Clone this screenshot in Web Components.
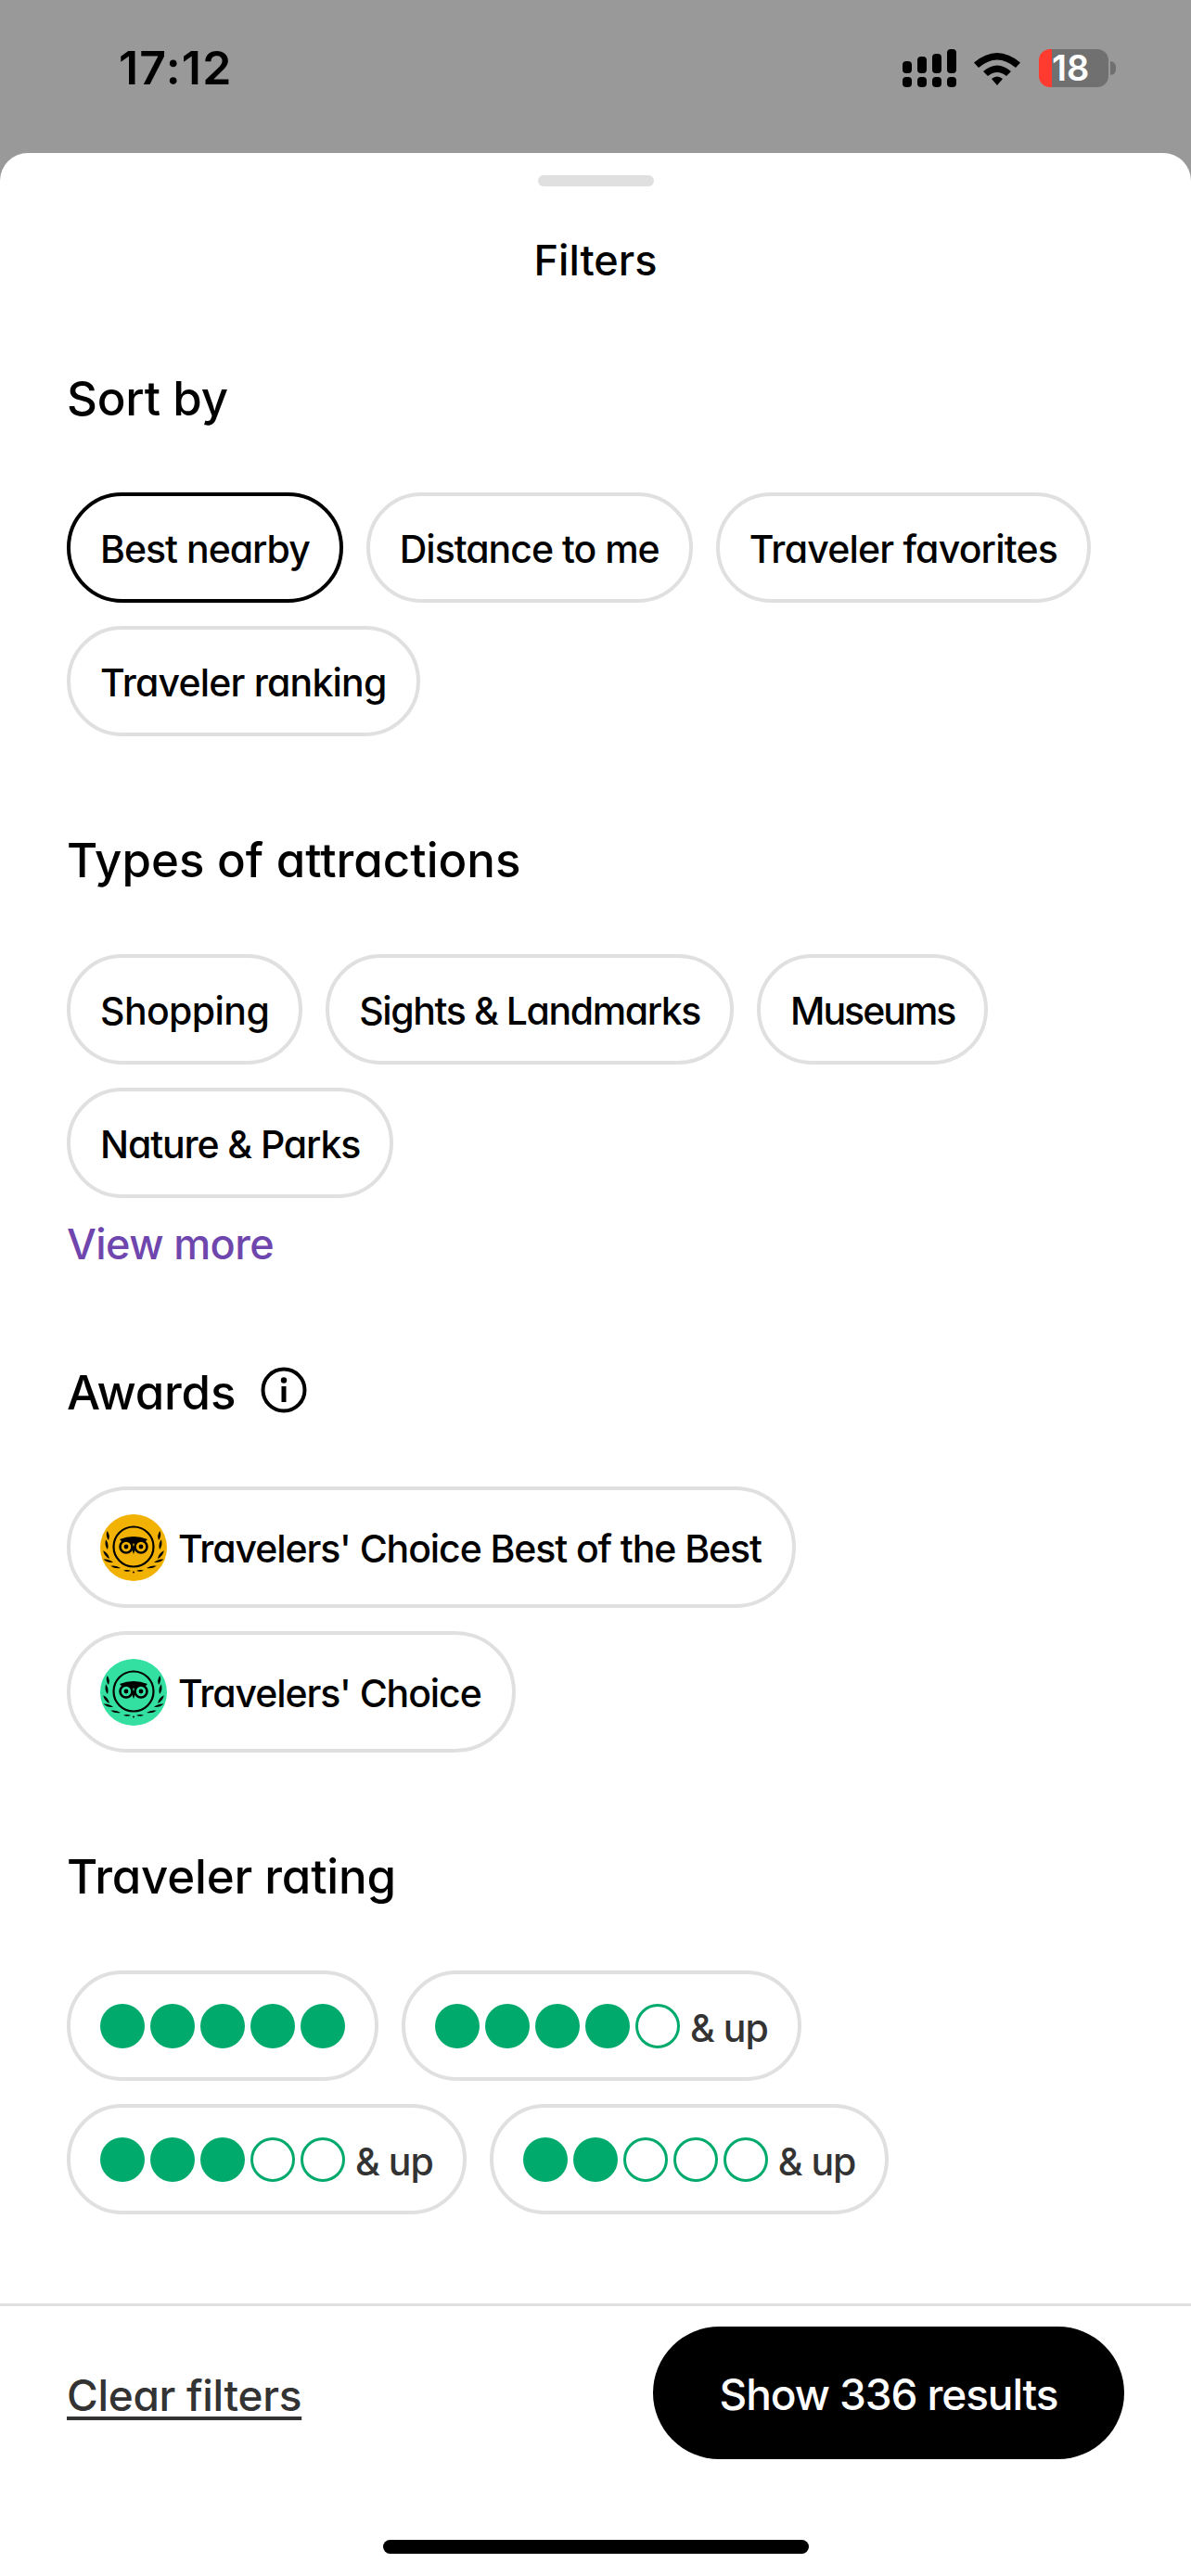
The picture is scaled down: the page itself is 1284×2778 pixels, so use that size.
<!DOCTYPE html>
<html>
<head>
<meta charset="utf-8">
<style>
  html, body { margin: 0; padding: 0; background: #999; }
  body { width: 1284px; height: 2778px; overflow: hidden; font-family: Inter, "Liberation Sans", sans-serif; font-feature-settings: 'cv11'; }
</style>
</head>
<body>
<filter-screen>
  <status-bar slot="status"></status-bar>
  <filter-sheet>
    <filter-section title="Sort by" style="margin-bottom: 103px">
      <filter-pill selected>Best nearby</filter-pill>
      <filter-pill>Distance to me</filter-pill>
      <filter-pill style="letter-spacing: -0.8px">Traveler favorites</filter-pill>
      <filter-pill style="letter-spacing: -0.8px">Traveler ranking</filter-pill>
    </filter-section>
    <filter-section title="Types of attractions" more="View more" style="margin-bottom: 100px; letter-spacing: 0">
      <filter-pill style="letter-spacing: -0.6px">Shopping</filter-pill>
      <filter-pill style="letter-spacing: -1.4px">Sights &amp; Landmarks</filter-pill>
      <filter-pill style="letter-spacing: -2px">Museums</filter-pill>
      <filter-pill style="letter-spacing: -1.1px">Nature &amp; Parks</filter-pill>
    </filter-section>
    <filter-section title="Awards" info style="margin-bottom: 103px">
      <award-pill color="#f2b203">Travelers' Choice Best of the Best</award-pill>
      <award-pill color="#34e0a1">Travelers' Choice</award-pill>
    </filter-section>
    <filter-section title="Traveler rating">
      <rating-pill value="5"></rating-pill>
      <rating-pill value="4"></rating-pill>
      <rating-pill value="3"></rating-pill>
      <rating-pill value="2"></rating-pill>
    </filter-section>
  </filter-sheet>
</filter-screen>

<script>
  class FilterScreen extends HTMLElement {
    constructor() {
      super();
      this.attachShadow({ mode: 'open' });
      this.shadowRoot.innerHTML = `
        <style>
          :host { display: flex; flex-direction: column; width: 1284px; height: 2778px; background: #999; }
        </style>
        <slot name="status"></slot>
        <slot></slot>
      `;
    }
  }

  class StatusBar extends HTMLElement {
    constructor() {
      super();
      this.attachShadow({ mode: 'open' });
      this.shadowRoot.innerHTML = `
        <style>
          :host { display: flex; align-items: center; justify-content: space-between; height: 165px; padding: 0 89px 19px 128px; box-sizing: border-box; flex: none; }
          .time { font-size: 50px; font-weight: 600; color: #000; letter-spacing: 1.2px; line-height: 60px; }
          .icons { display: flex; align-items: center; gap: 19px; }
          .battery { position: relative; width: 75px; height: 41px; border-radius: 12px; background: linear-gradient(90deg, #ff3b30 14px, #707070 14px); color: #fff; font-size: 38px; font-weight: 600; line-height: 41px; padding-left: 14px; box-sizing: border-box; }
          .battery::after { content: ''; position: absolute; left: 77px; top: 13px; width: 6px; height: 15px; background: #707070; border-radius: 0 8px 8px 0; }
          .wifi { margin-right: 1px; }
          svg { display: block; }
        </style>
        <span class="time">17:12</span>
        <div class="icons">
          <svg width="58" height="41" viewBox="0 0 58 41" fill="#000">
            <rect x="0" y="13" width="10" height="13" rx="4"/>
            <rect x="16" y="8" width="10" height="18" rx="4"/>
            <rect x="32" y="5" width="10" height="21" rx="4"/>
            <rect x="48" y="0" width="10" height="26" rx="4"/>
            <rect x="0" y="30" width="10" height="11" rx="4"/>
            <rect x="16" y="30" width="10" height="11" rx="4"/>
            <rect x="32" y="30" width="10" height="11" rx="4"/>
            <rect x="48" y="30" width="10" height="11" rx="4"/>
          </svg>
          <svg class="wifi" width="50" height="37" viewBox="0 0 50 37" fill="#000">
            <path d="M0 12.5 Q25 -8.5 50 12.5 L45 18 Q25 1 5 18 Z"/>
            <path d="M10 22 Q25 9 40 22 L35 27 Q25 19 15 27 Z"/>
            <path d="M19 30 Q25 25 31 30 L25 37 Z"/>
          </svg>
          <div class="battery">18</div>
        </div>
      `;
    }
  }

  class FilterSheet extends HTMLElement {
    constructor() {
      super();
      this.attachShadow({ mode: 'open' });
      this.shadowRoot.innerHTML = `
        <style>
          :host { display: flex; flex-direction: column; flex: 1; background: #fff; border-radius: 30px 30px 0 0; min-height: 0; }
          .handle { width: 125px; height: 12px; border-radius: 6px; background: #e0e0e0; margin: 24px auto 0; flex: none; }
          .title { height: 60px; line-height: 60px; margin-top: 50px; text-align: center; font-size: 45px; font-weight: 500; color: #000; flex: none; }
          .body { flex: 1; padding-top: 88px; box-sizing: border-box; min-height: 0; }
          .footer { flex: none; border-top: 3px solid #e0e0e0; height: 294px; box-sizing: border-box; padding: 22px 72px 24px; display: flex; flex-direction: column; }
          .actions { display: flex; align-items: center; justify-content: space-between; }
          .clear { padding-top: 4px; font-size: 46px; font-weight: 500; letter-spacing: -0.3px; color: #333; text-decoration: underline; text-decoration-thickness: 4px; text-underline-offset: 6px; }
          .show { height: 143px; width: 508px; padding-top: 3px; box-sizing: border-box; border-radius: 72px; background: #000; color: #fff; font-size: 46px; font-weight: 500; letter-spacing: -1.1px; display: flex; align-items: center; justify-content: center; }
          .home { width: 459px; height: 15px; border-radius: 8px; background: #000; margin: 87px auto 0; }
        </style>
        <div class="handle"></div>
        <div class="title">Filters</div>
        <div class="body"><slot></slot></div>
        <div class="footer">
          <div class="actions">
            <span class="clear">Clear filters</span>
            <span class="show">Show 336 results</span>
          </div>
          <div class="home"></div>
        </div>
      `;
    }
  }

  class FilterSection extends HTMLElement {
    constructor() {
      super();
      this.attachShadow({ mode: 'open' });
      const info = this.hasAttribute('info') ? `
        <svg width="50" height="50" viewBox="0 0 50 50" fill="none" style="margin-top: -5px">
          <circle cx="25" cy="25" r="22.5" stroke="#000" stroke-width="4"/>
          <circle cx="25" cy="14.5" r="3.2" fill="#000"/>
          <rect x="22.5" y="21" width="5" height="17" fill="#000"/>
        </svg>` : '';
      const more = this.getAttribute('more');
      this.shadowRoot.innerHTML = `
        <style>
          :host { display: block; padding: 0 72px; margin-bottom: 100px; letter-spacing: -0.2px; }
          .head { display: flex; align-items: center; gap: 27px; height: 60px; font-size: 51px; font-weight: 500; color: #000; }
          .pills { display: flex; flex-wrap: wrap; gap: 25px; margin-top: 72px; }
          .more { height: 60px; line-height: 60px; margin-top: 20px; margin-bottom: -1px; font-size: 45px; font-weight: 500; letter-spacing: -0.6px; color: #6f46ad; }
        </style>
        <div class="head"><span>${this.getAttribute('title')}</span>${info}</div>
        <div class="pills"><slot></slot></div>
        ${more ? `<div class="more">${more}</div>` : ''}
      `;
    }
  }

  class FilterPill extends HTMLElement {
    constructor() {
      super();
      this.attachShadow({ mode: 'open' });
      this.shadowRoot.innerHTML = `
        <style>
          :host { display: inline-flex; align-items: center; height: 119px; padding: 3px 32px 0; box-sizing: border-box; border: 4px solid #e0e0e0; border-radius: 60px; font-size: 41px; font-weight: 500; letter-spacing: -1px; color: #000; white-space: nowrap; }
          :host([selected]) { border-color: #000; }
        </style>
        <slot></slot>
      `;
    }
  }

  class AwardPill extends HTMLElement {
    constructor() {
      super();
      this.attachShadow({ mode: 'open' });
      this.shadowRoot.innerHTML = `
        <style>
          :host { display: inline-flex; align-items: center; gap: 12px; height: 131px; padding: 0 33px 0 32px; box-sizing: border-box; border: 4px solid #e0e0e0; border-radius: 66px; font-size: 41px; font-weight: 500; letter-spacing: -1.1px; color: #000; white-space: nowrap; }
          svg { display: block; flex: none; }
          span { padding-top: 3px; }
        </style>
        <svg width="72" height="72" viewBox="0 0 72 72">
          <circle cx="36" cy="36" r="36" fill="${this.getAttribute('color')}"/>
          <defs>
            <path id="leaf" d="M0 0 Q3.2 -5 0 -10 Q-3.2 -5 0 0Z"/>
            <g id="half" fill="#000">
              <use href="#leaf" transform="translate(9 28) rotate(-8) scale(.9 1)"/>
              <use href="#leaf" transform="translate(8 38) rotate(-10) scale(.9 1.1)"/>
              <use href="#leaf" transform="translate(10 48) rotate(-38) scale(.9 1.1)"/>
              <use href="#leaf" transform="translate(14 52) rotate(-72) scale(.8 1.1)"/>
              <use href="#leaf" transform="translate(22 58) rotate(-78) scale(.75 1.1)"/>
              <use href="#leaf" transform="translate(33 61) rotate(-88) scale(.6 .8)"/>
            </g>
          </defs>
          <use href="#half"/>
          <use href="#half" transform="translate(72 0) scale(-1 1)"/>
          <circle cx="36" cy="35" r="21.5" fill="none" stroke="#000" stroke-width="2.2"/>
          <path d="M21 27 Q36 21 51 27 L48 30 Q42 27.5 36 32 Q30 27.5 24 30Z" fill="#000"/>
          <circle cx="28" cy="35" r="6.5" fill="none" stroke="#000" stroke-width="2.6"/>
          <circle cx="44" cy="35" r="6.5" fill="none" stroke="#000" stroke-width="2.6"/>
          <circle cx="28" cy="35" r="2.4" fill="#000"/>
          <circle cx="44" cy="35" r="2.4" fill="#000"/>
          <path d="M33.5 36 L36 43 L38.5 36 Q36 33 33.5 36Z" fill="#000"/>
          <circle cx="36" cy="62.5" r="1" fill="#000"/>
        </svg>
        <span><slot></slot></span>
      `;
    }
  }

  class RatingPill extends HTMLElement {
    constructor() {
      super();
      this.attachShadow({ mode: 'open' });
      const value = Number(this.getAttribute('value'));
      let dots = '';
      for (let i = 0; i < 5; i++) {
        dots += i < value
          ? `<circle cx="${24 + i * 54}" cy="24" r="24" fill="#00aa6c"/>`
          : `<circle cx="${24 + i * 54}" cy="24" r="22.5" fill="none" stroke="#00aa6c" stroke-width="3"/>`;
      }
      this.shadowRoot.innerHTML = `
        <style>
          :host { display: inline-flex; align-items: center; height: 119px; padding: 0 32px; box-sizing: border-box; border: 4px solid #e0e0e0; border-radius: 60px; white-space: nowrap; }
          svg { display: block; flex: none; }
          .up { margin-left: 11px; font-size: 41px; font-weight: 500; letter-spacing: -1px; color: #333; padding-top: 5px; }
        </style>
        <svg width="264" height="48" viewBox="0 0 264 48">${dots}</svg>
        ${value < 5 ? '<span class="up">&amp; up</span>' : ''}
      `;
    }
  }

  customElements.define('filter-screen', FilterScreen);
  customElements.define('status-bar', StatusBar);
  customElements.define('filter-sheet', FilterSheet);
  customElements.define('filter-section', FilterSection);
  customElements.define('filter-pill', FilterPill);
  customElements.define('award-pill', AwardPill);
  customElements.define('rating-pill', RatingPill);
</script>
</body>
</html>
